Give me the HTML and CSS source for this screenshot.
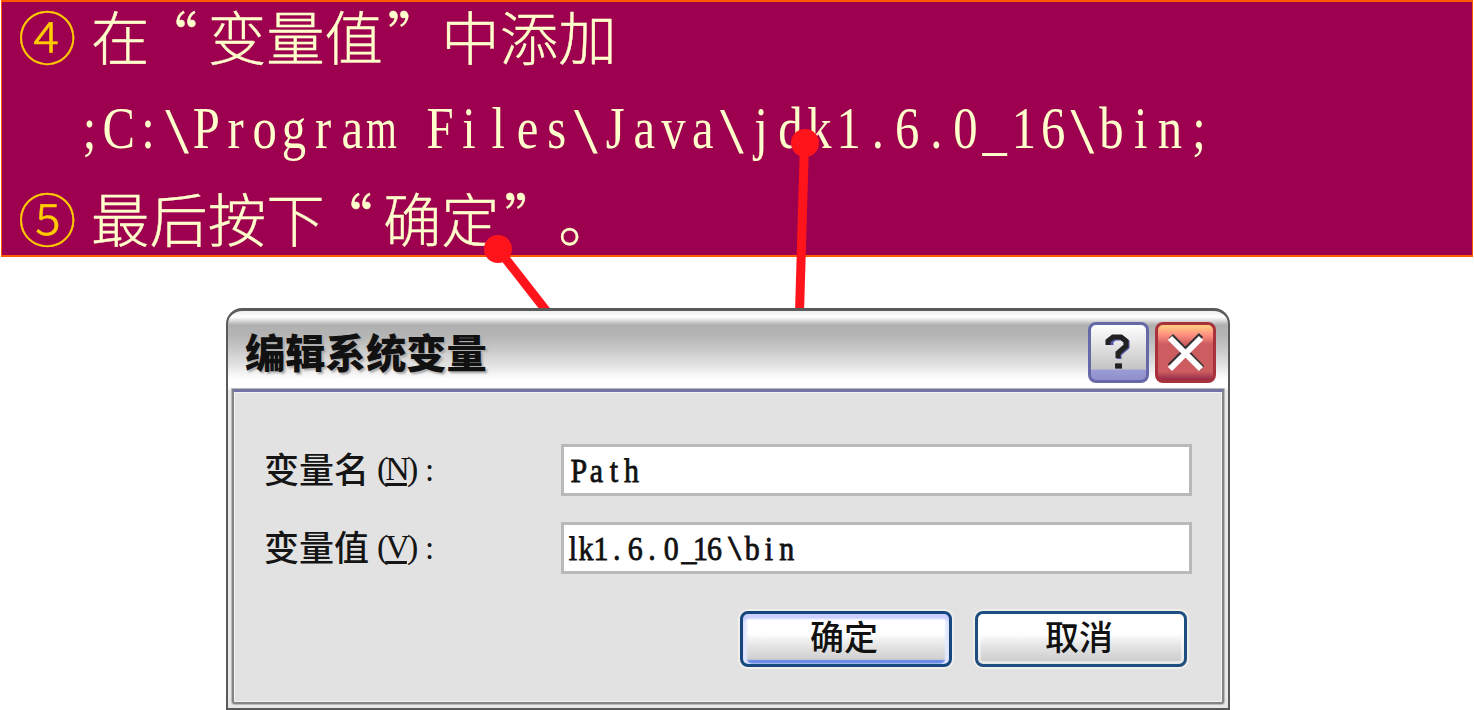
FILE: index.html
```
<!DOCTYPE html>
<html lang="zh-CN">
<head>
<meta charset="utf-8">
<title>编辑系统变量</title>
<link rel="stylesheet" href="styles.css">
</head>
<body>
<main class="slide">
  <section class="banner">
    <p class="step"><span class="num">④</span><span class="words">在<span class="open">“</span>变量值<span class="shut">”</span>中添加</span></p>
    <svg class="path-line" width="1200" height="66" viewBox="0 0 1200 66">
      <g class="path-text">
        <text transform="translate(0 48) scale(.811 1)" x="18 54 90 126 162 198 234 270 306 342">;C:<tspan class="slash">\</tspan>Progra</text>
        <text transform="translate(306.5 48) scale(.66 1)" x="0">m</text>
        <text transform="translate(0 48) scale(.811 1)" x="450 486 522 558 594 630 666 702 738 774 810 846 882 918 954 990 1026 1062 1098 1134 1170 1206 1242 1278 1314 1350 1386">Files<tspan class="slash">\</tspan>Java<tspan class="slash">\</tspan>jdk1.6.0_16<tspan class="slash">\</tspan>bin;</text>
      </g>
    </svg>
    <p class="step"><span class="num">⑤</span><span class="words">最后按下<span class="open">“</span>确定<span class="shut">”</span>。</span></p>
  </section>

  <section class="dialog">
    <header class="titlebar">
      <h1 class="title">编辑系统变量</h1>
      <div class="controls">
        <button class="ctl help" aria-label="help">
          <svg width="54" height="54" viewBox="0 0 54 54"><path class="shade" d="M20 19v-4l4-3h7l5 4v5l-8 7v5M25 40h6"/><path class="ink" d="M17 19v-4l5-4h8l5 4v5l-8 7v5M24 40h7"/></svg>
        </button>
        <button class="ctl close" aria-label="close">
          <svg width="54" height="54" viewBox="0 0 54 54"><path class="shade" d="M13 10l31 32M43 9L12 40"/><path class="ink" d="M12 12l31 31M43 12L12 43"/></svg>
        </button>
      </div>
    </header>
    <div class="panel">
      <div class="row">
        <label class="label">变量名<span class="key">(<u>N</u>)</span><span class="colon">:</span></label>
        <div class="field"><svg width="600" height="46" viewBox="0 0 600 46"><text transform="translate(6 35) scale(.88 1)" x="10 30 50 70">Path</text></svg></div>
      </div>
      <div class="row">
        <label class="label">变量值<span class="key">(<u>V</u>)</span><span class="colon">:</span></label>
        <div class="field"><svg width="600" height="46" viewBox="0 0 600 46"><text transform="translate(0 35) scale(.88 1)" x="10 25 42 60 81 100 122 142 155 171 194 214 233 253">lk1.6.0_16<tspan class="slash">\</tspan>bin</text></svg></div>
      </div>
      <div class="actions">
        <button class="btn primary">确定</button>
        <button class="btn">取消</button>
      </div>
    </div>
  </section>

  <svg class="pointers" width="1474" height="308" viewBox="0 0 1474 308">
    <circle cx="498" cy="249" r="14"/><path d="M498 249L548 313"/>
    <circle cx="805" cy="143" r="14"/><path d="M804.500 143L799.500 313"/>
  </svg>
</main>
</body>
</html>
```
FILE: styles.css
```
* { box-sizing: border-box; }
body { margin: 0; background: #fff; }
p, h1 { margin: 0; }
.slide { position: relative; width: 1474px; height: 710px; overflow: hidden; }
.banner {
  width: 1472px; height: 257px; margin-left: 1px;
  border: 1px solid #ff5a00; border-top-width: 2px; border-bottom-width: 2px;
  background: #9c004f; color: #ffffcc;
  font-family: "Noto Sans CJK SC", sans-serif; font-weight: 300;
  text-spacing-trim: space-all; font-kerning: none;
}
.step { display: flex; height: 68px; font-size: 58.4px; line-height: 66px; white-space: nowrap; -webkit-text-stroke: .4px currentColor; }
.num { width: 74px; padding-left: 16px; color: #fc0; }
.words { padding-left: 15px; }
.open { margin: 0 10px 0 -10px; }
.shut { margin: 0 -4px 0 4px; }
.path-line { display: block; margin: 30px 0 18px 73px; overflow: visible; }
.path-text text { font-family: "Liberation Serif", serif; font-size: 60px; font-weight: 400; fill: #ffffcc; text-anchor: middle; }
.path-text .slash { font-family: "Liberation Mono", monospace; font-size: 60px; baseline-shift: -5px; }

.dialog {
  display: flex; flex-direction: column;
  width: 1004px; height: 402px; margin: 51px 0 0 226px; padding: 0 4px 4px 4px;
  border: 2px solid #5a5a5a; border-top-width: 3px; border-radius: 16px 16px 0 0;
  background: linear-gradient(#eee 0, #fff 6px, #b0b0b0 14px, #b4b4b4 24px, #c8c8c8 38px, #e4e4e4 55px, #fff 68px, #fff 76px, #e8e8e8 80px);
}
.titlebar { display: flex; justify-content: space-between; height: 78px; padding: 11px 8px 0 13px; }
.title { font: 900 40.300px/57px "Noto Sans CJK SC", sans-serif; color: #111; text-shadow: 2px 2px 2px #aaa; white-space: nowrap; }
.controls { display: flex; gap: 6px; }
.ctl { width: 61px; height: 61px; padding: 0; border: 3px solid; border-radius: 8px; }
.ctl svg { display: block; fill: none; }
.help { border-color: #6668a8; background: linear-gradient(#fff, #ddd 45%, #c4c4c4 80%, #9a9ad4 82%, #9090cc); }
.help .shade { stroke: #5558a8; stroke-width: 5; }
.help .ink { stroke: #222; stroke-width: 5; }
.close { border-color: #a8323c; background: linear-gradient(#ffd080, #ff9080 18%, #cc5c60 35%, #cc5c60 85%, #942848); }
.close .shade { stroke: #333; stroke-width: 6; }
.close .ink { stroke: #fff; stroke-width: 6; }
.panel {
  flex: 1; padding: 52px 30px 0 30px;
  border: 2px solid #858585; border-top: 3px solid #7473a5; border-radius: 0 0 3px 3px;
  background: #e2e2e2; box-shadow: 0 0 0 1px #bbb, inset 0 0 0 1px #f2f0f0;
}
.row { display: flex; align-items: center; height: 52px; margin-bottom: 26px; }
.label { display: flex; width: 297px; height: 52px; color: #151515; font: 500 35px/48px "Noto Sans CJK SC", sans-serif; }
.key { width: 52px; padding-left: 8px; font: 34px/50px "Liberation Serif", serif; letter-spacing: -3px; }
.key u { text-underline-offset: 3px; text-decoration-thickness: 3px; }
.colon { padding-left: 4px; font: 33px/52px "Liberation Serif", serif; }
.field { width: 631px; height: 52px; border: 3px solid #b9b9b9; background: #fff; color: #111; }
.field svg { display: block; }
.field text { font-family: "Liberation Serif", serif; font-size: 34px; font-weight: 400; fill: #111; stroke: #111; stroke-width: .8px; text-anchor: middle; }
.field .slash { font-family: "Liberation Mono", monospace; font-size: 31px; }
.actions { display: flex; justify-content: flex-end; gap: 23px; margin: 37px 5px 0 0; }
.btn {
  width: 212px; height: 56px; padding: 0 4px 7px 0; border: 3px solid #1f4e80; border-radius: 8px;
  background: linear-gradient(#fff 40%, #e8e8e8 60%, #c8c8c8);
  color: #111; font: 500 34px/41px "Noto Sans CJK SC", sans-serif;
  box-shadow: 0 0 0 2px #efeeea, inset 0 0 0 3px #fff8;
}
.btn.primary { border-color: #16477f; box-shadow: 0 0 0 2px #efeeea, inset 0 5px 2px #ccd0ff, inset 4px 0 2px #e4e8ff, inset -4px 0 2px #e4e8ff, inset 0 -4px 1px #6688e8; }
.pointers { position: absolute; left: 0; top: 0; fill: #ff141c; }
.pointers path { stroke: #ff141c; stroke-width: 9; }
```
